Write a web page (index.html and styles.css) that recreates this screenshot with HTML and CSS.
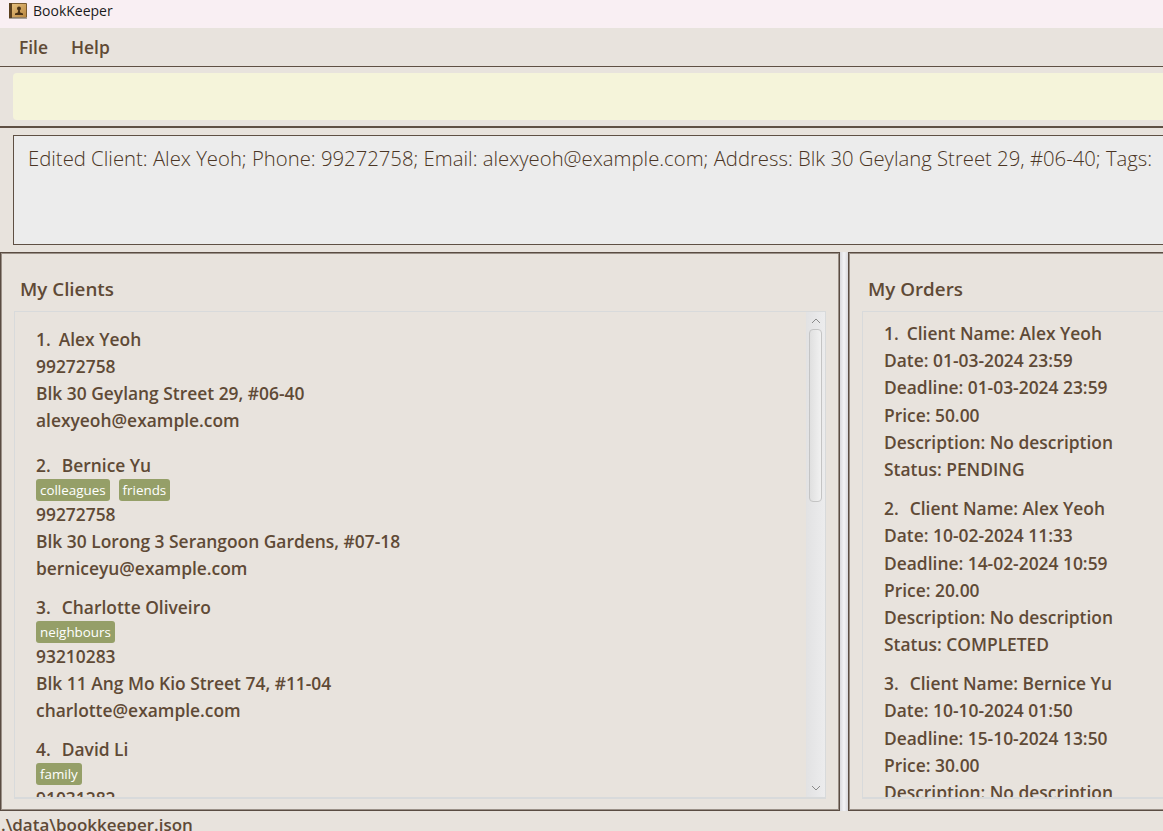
FILE: index.html
```html
<!DOCTYPE html>
<html lang="en">
<head>
<meta charset="utf-8">
<title>BookKeeper</title>
<link rel="stylesheet" href="styles.css">
</head>
<body>
<div class="window">
  <header class="titlebar">
    <svg class="app-icon" viewBox="0 0 18 16" aria-hidden="true">
      <defs>
        <linearGradient id="cover" x1="0" y1="0" x2="1" y2="1">
          <stop offset="0" stop-color="#e6bf7e"/>
          <stop offset="1" stop-color="#b9873f"/>
        </linearGradient>
      </defs>
      <rect x="0" y="0" width="18" height="15" rx="1" fill="#7a5a2e"/>
      <rect x="0" y="14.5" width="18" height="1.5" fill="#a9a29a"/>
      <rect x="3" y="1" width="14" height="13" fill="url(#cover)"/>
      <rect x="0" y="0" width="3" height="15" fill="#5a3f1e"/>
      <circle cx="10" cy="5.5" r="2" fill="#4a3216"/>
      <path d="M9.2 7h1.6l.4 2.4 2.8 1.1V12H6v-1.5l2.8-1.1z" fill="#4a3216"/>
    </svg>
    <span>BookKeeper</span>
  </header>
  <nav class="menubar"><span>File</span><span>Help</span></nav>
  <section class="command-pane"><div class="command-input"></div></section>
  <section class="result-pane">
    <div class="result-box">Edited Client: Alex Yeoh; Phone: 99272758; Email: alexyeoh@example.com; Address: Blk 30 Geylang Street 29, #06-40; Tags:</div>
  </section>
  <main class="panels">
    <section class="panel panel-clients">
      <h2>My Clients</h2>
      <div class="list list-clients">
        <div class="list-content">
          <article class="card">
            <div class="line"><span class="ordinal ordinal-first">1.</span>&nbsp; Alex Yeoh</div>
            <div class="line">99272758</div>
            <div class="line">Blk 30 Geylang Street 29, #06-40</div>
            <div class="line">alexyeoh@example.com</div>
          </article>
          <article class="card">
            <div class="line"><span class="ordinal">2.</span>&nbsp; Bernice Yu</div>
            <div class="tags"><span class="tag">colleagues</span><span class="tag">friends</span></div>
            <div class="line">99272758</div>
            <div class="line">Blk 30 Lorong 3 Serangoon Gardens, #07-18</div>
            <div class="line">berniceyu@example.com</div>
          </article>
          <article class="card">
            <div class="line"><span class="ordinal">3.</span>&nbsp; Charlotte Oliveiro</div>
            <div class="tags"><span class="tag">neighbours</span></div>
            <div class="line">93210283</div>
            <div class="line">Blk 11 Ang Mo Kio Street 74, #11-04</div>
            <div class="line">charlotte@example.com</div>
          </article>
          <article class="card">
            <div class="line"><span class="ordinal">4.</span>&nbsp; David Li</div>
            <div class="tags"><span class="tag">family</span></div>
            <div class="line">91031282</div>
          </article>
        </div>
        <div class="scrollbar">
          <svg class="arrow" viewBox="0 0 10 6" aria-hidden="true"><path d="M1 5l4-4 4 4" fill="none" stroke="#8a8a8a"/></svg>
          <div class="track"><div class="thumb"></div></div>
          <svg class="arrow" viewBox="0 0 10 6" aria-hidden="true"><path d="M1 1l4 4 4-4" fill="none" stroke="#8a8a8a"/></svg>
        </div>
      </div>
    </section>
    <div class="splitter"></div>
    <section class="panel panel-orders">
      <h2>My Orders</h2>
      <div class="list list-orders">
        <div class="list-content">
          <article class="card order">
            <div class="line"><span class="ordinal ordinal-first">1.</span>&nbsp; Client Name: Alex Yeoh</div>
            <div class="line">Date: 01-03-2024 23:59</div>
            <div class="line">Deadline: 01-03-2024 23:59</div>
            <div class="line">Price: 50.00</div>
            <div class="line">Description: No description</div>
            <div class="line">Status: PENDING</div>
          </article>
          <article class="card order">
            <div class="line"><span class="ordinal">2.</span>&nbsp; Client Name: Alex Yeoh</div>
            <div class="line">Date: 10-02-2024 11:33</div>
            <div class="line">Deadline: 14-02-2024 10:59</div>
            <div class="line">Price: 20.00</div>
            <div class="line">Description: No description</div>
            <div class="line">Status: COMPLETED</div>
          </article>
          <article class="card order">
            <div class="line"><span class="ordinal">3.</span>&nbsp; Client Name: Bernice Yu</div>
            <div class="line">Date: 10-10-2024 01:50</div>
            <div class="line">Deadline: 15-10-2024 13:50</div>
            <div class="line">Price: 30.00</div>
            <div class="line">Description: No description</div>
          </article>
        </div>
      </div>
    </section>
  </main>
  <footer class="statusbar">.\data\bookkeeper.json</footer>
</div>
</body>
</html>
```
FILE: styles.css
```css
* { box-sizing: border-box; }
html, body { margin: 0; height: 100%; overflow: hidden; }
body {
  background: #e8e3dd;
  color: #5f4a36;
  font-family: "Open Sans", "Noto Sans", sans-serif;
  font-weight: 600;
}
.window { display: flex; flex-direction: column; height: 831px; width: 1163px; overflow: hidden; }

.titlebar {
  flex: none; height: 28px; background: #f9eff3; color: #1b1b1b;
  display: flex; align-items: center; gap: 6px; padding: 0 0 7px 9px;
  font: 400 14px "Open Sans", sans-serif;
}
.app-icon { width: 18px; height: 16px; flex: none; }

.menubar {
  flex: none; height: 38px; display: flex; align-items: center; gap: 23px;
  padding: 0 0 0 19px; font-size: 17.4px;
}

.command-pane {
  flex: none; height: 62px; padding: 6px 0 6px 13px;
  border-top: 1px solid #5f5044; border-bottom: 2px solid #5f5044;
}
.command-input { height: 47px; background: #f5f4da; border-radius: 4px 0 0 4px; }

.result-pane { flex: none; height: 124px; padding: 7px 0 0 13px; }
.result-box {
  height: 110px; width: 1180px; background: #ececec;
  border: 1px solid #5f5044; border-right: none; padding: 7px 0 0 14px;
  font-size: 20.3px; font-weight: 300; white-space: nowrap; line-height: 30px; color: #4a3524;
}

.panels { flex: none; height: 559px; display: flex; }
.panel {
  height: 559px; padding-top: 58px; position: relative;
  border: 1px solid #5a4c42;
  box-shadow: inset 0 0 0 1px #9a9087;
}
.panel h2 {
  position: absolute; margin: 0; top: 23px; font-size: 18.8px; font-weight: 600; line-height: 27px;
}
.panel-clients { width: 840px; flex: none; padding-left: 13px; padding-right: 13px; }
.panel-clients h2 { left: 19px; }
.panel-orders { flex: none; width: 400px; border-right: none; padding-left: 13px; }
.panel-orders h2 { left: 19px; }
.splitter { flex: none; width: 8px; background: linear-gradient(90deg, #d8d8dc, #f3f3f5, #d8d8dc); }

.list { height: 488px; border: 1px solid #d8dadb; border-bottom-width: 2px; display: flex; overflow: hidden; }
.list-content { flex: 1; min-width: 0; overflow: hidden; }
.list-clients .list-content { padding: 14px 0 0 21px; }
.list-orders { border-right: none; }
.list-orders .list-content { padding: 8px 0 0 21px; }

.card { min-height: 126px; padding-bottom: 12px; }
.order { min-height: 0; }
.line { height: 27px; line-height: 27px; font-size: 17.4px; white-space: nowrap; }
.order .line { height: 27.2px; line-height: 27.2px; }
.ordinal { margin-right: 2px; }
.ordinal-first { margin-right: -1px; }
.tags { display: flex; gap: 9px; height: 22px; }
.tag {
  height: 22px; line-height: 22px; padding: 0 4px; background: #959f68; color: #fff;
  border-radius: 3px; font-size: 13.4px; font-weight: 500;
}

.scrollbar { flex: none; width: 19px; display: flex; flex-direction: column; align-items: center; background: linear-gradient(90deg, #e2e2e3, #ececed); }
.arrow { flex: none; width: 10px; height: 6px; margin: 6px 0; }
.track { flex: 1; width: 100%; padding: 0 3px; }
.thumb { height: 173px; margin-top: -1px; border: 1px solid #c4c4c4; border-radius: 4px; background: linear-gradient(90deg, #e0e0e0, #f1f1f1); }

.statusbar { flex: none; height: 20px; padding: 4px 0 0 1px; font-size: 17px; line-height: 20px; white-space: nowrap; }
```
